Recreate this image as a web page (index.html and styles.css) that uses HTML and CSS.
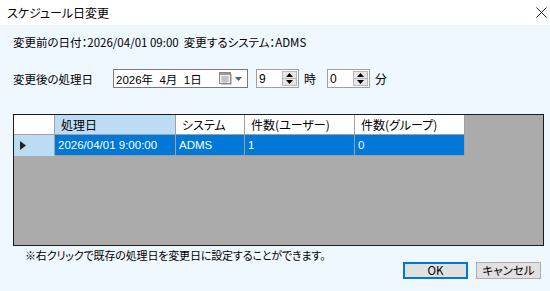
FILE: index.html
```html
<!DOCTYPE html>
<html lang="ja">
<head>
<meta charset="utf-8">
<link rel="stylesheet" href="styles.css">
</head>
<body>
<div class="window">
  <div class="titlebar">
    <span class="title">スケジュール日変更</span>
    <svg class="close" width="11" height="11" viewBox="0 0 11 11"><path d="M0.5 0.5 L10.5 10.5 M10.5 0.5 L0.5 10.5" stroke="#222" stroke-width="1" fill="none"/></svg>
  </div>
  <div class="content">
    <div class="info">変更前の日付：2026/04/01 09:00&nbsp;&nbsp;変更するシステム：ADMS</div>
    <div class="controls">
      <span class="label">変更後の処理日</span>
      <div class="datebox">
        <span class="datetext">2026年&nbsp;&nbsp;4月&nbsp;&nbsp;1日</span>
        <svg class="cal" width="13" height="13" viewBox="0 0 13 13">
          <rect x="0.5" y="0.5" width="11" height="11" fill="#f4f4f4" stroke="#8a8a8a"/>
          <rect x="1" y="1" width="10" height="2" fill="#9a9a9a"/>
          <path d="M2 5 H10 M2 7 H10 M2 9 H10 M4 4 V11 M6 4 V11 M8 4 V11" stroke="#b5b5b5" stroke-width="1"/>
          <path d="M12.5 2 V12.5 H2" stroke="#c8c8c8" stroke-width="1" fill="none"/>
        </svg>
        <svg class="drop" width="7" height="4" viewBox="0 0 7 4"><path d="M0 0 H7 L3.5 4 Z" fill="#4a6283"/></svg>
      </div>
      <div class="spin first">
        <span class="spinval">9</span>
        <div class="spinbtns">
          <div class="sb up"><svg width="7" height="4" viewBox="0 0 7 4"><path d="M0 4 H7 L3.5 0 Z" fill="#000"/></svg></div>
          <div class="sb down"><svg width="7" height="4" viewBox="0 0 7 4"><path d="M0 0 H7 L3.5 4 Z" fill="#000"/></svg></div>
        </div>
      </div>
      <span class="unit">時</span>
      <div class="spin second">
        <span class="spinval">0</span>
        <div class="spinbtns">
          <div class="sb up"><svg width="7" height="4" viewBox="0 0 7 4"><path d="M0 4 H7 L3.5 0 Z" fill="#000"/></svg></div>
          <div class="sb down"><svg width="7" height="4" viewBox="0 0 7 4"><path d="M0 0 H7 L3.5 4 Z" fill="#000"/></svg></div>
        </div>
      </div>
      <span class="unit">分</span>
    </div>
    <div class="grid">
      <div class="gtable">
        <div class="cell corner"></div>
        <div class="cell hdr sel">処理日</div>
        <div class="cell hdr">システム</div>
        <div class="cell hdr">件数(ユーザー)</div>
        <div class="cell hdr">件数(グループ)</div>
        <div class="cell rowhdr"><svg width="6" height="9" viewBox="0 0 6 9"><path d="M0 0 L6 4.5 L0 9 Z" fill="#222"/></svg></div>
        <div class="cell data">2026/04/01 9:00:00</div>
        <div class="cell data">ADMS</div>
        <div class="cell data">1</div>
        <div class="cell data">0</div>
      </div>
    </div>
    <div class="note">※右クリックで既存の処理日を変更日に設定することができます。</div>
    <div class="buttons">
      <button class="btn ok">OK</button>
      <button class="btn">キャンセル</button>
    </div>
  </div>
</div>
</body>
</html>
```
FILE: styles.css
```css
html, body {
  margin: 0;
  padding: 0;
}
body {
  width: 550px;
  height: 291px;
  overflow: hidden;
  font-family: "Noto Sans CJK JP", "Liberation Sans", sans-serif;
  font-size: 12px;
  color: #000;
  font-feature-settings: "palt";
}
.window {
  width: 550px;
  height: 291px;
  display: flex;
  flex-direction: column;
}
.titlebar {
  height: 25px;
  background: #fff;
  display: flex;
  align-items: center;
  justify-content: space-between;
  padding: 0 3px 0 7px;
}
.title {
  font-size: 12px;
  line-height: 16px;
}
.close {
  display: block;
}
.content {
  flex: 1;
  background: #eff7ff;
  padding: 9px 6px 0 13px;
  display: flex;
  flex-direction: column;
}
.info {
  line-height: 16px;
  height: 16px;
  font-size: 11.5px;
}
.controls {
  margin-top: 19px;
  height: 19px;
  display: flex;
  align-items: center;
}
.label {
  width: 100px;
  font-size: 11.5px;
}
.datebox {
  width: 131px;
  height: 17px;
  border: 1px solid #7a7a7a;
  background: #fff;
  display: flex;
  align-items: center;
  padding-left: 2px;
}
.datetext {
  flex: 1;
  font-family: "Liberation Sans", "Noto Sans CJK JP", sans-serif;
  font-size: 11.5px;
}
.cal {
  display: block;
  margin-right: 3px;
}
.drop {
  display: block;
  margin-right: 5px;
}
.spin {
  box-sizing: border-box;
  width: 43px;
  height: 19px;
  border: 1px solid #a0a0a0;
  background: #fff;
  display: flex;
  align-items: center;
  padding-left: 2px;
}
.spin.first {
  margin-left: 8px;
}
.spin.second {
  margin-left: 11px;
}
.spinval {
  flex: 1;
  font-family: "Liberation Sans", sans-serif;
  font-size: 12px;
}
.spinbtns {
  width: 15px;
  height: 15px;
  margin-right: 1px;
  display: flex;
  flex-direction: column;
}
.sb {
  flex: 1;
  background: #e6e6e6;
  border: 1px solid #b8b8b8;
  display: flex;
  align-items: center;
  justify-content: center;
}
.sb.down {
  border-top: none;
}
.sb svg {
  display: block;
}
.unit {
  margin-left: 5px;
  font-size: 12px;
}
.grid {
  margin-top: 26px;
  width: 529px;
  height: 130px;
  border: 1px solid #1a1a1a;
  background: #ababab;
}
.gtable {
  display: grid;
  grid-template-columns: 41px 121px 69px 110px 110px;
  grid-template-rows: 20px 21px;
  width: 451px;
}
.cell {
  border-right: 1px solid #a0a0a0;
  border-bottom: 1px solid #a0a0a0;
  display: flex;
  align-items: center;
  white-space: nowrap;
  overflow: hidden;
}
.corner {
  background: #fff;
}
.hdr {
  background: #fff;
  padding-left: 6px;
  font-size: 12px;
}
.hdr.sel {
  background: #bcdcf4;
}
.rowhdr {
  background: #bcdcf4;
  padding-left: 6px;
  border-bottom-color: #bcdcf4;
}
.rowhdr svg {
  display: block;
}
.data {
  background: #0078d7;
  color: #fff;
  padding-left: 3px;
  font-family: "Liberation Sans", "Noto Sans CJK JP", sans-serif;
  font-size: 11.5px;
}
.note {
  margin-top: 2px;
  padding-left: 12px;
  line-height: 14px;
  height: 14px;
  font-size: 11px;
  letter-spacing: -0.15px;
}
.buttons {
  display: flex;
  justify-content: flex-end;
  gap: 8px;
  padding-right: 3px;
}
.btn {
  width: 65px;
  height: 17px;
  margin: 0;
  padding: 0;
  background: #e1e1e1;
  border: 1px solid #adadad;
  font-family: "Noto Sans CJK JP", "Liberation Sans", sans-serif;
  font-size: 11.5px;
  line-height: 15px;
  color: #000;
  font-feature-settings: "palt";
}
.btn.ok {
  border: 2px solid #0078d7;
  line-height: 13px;
}
```
